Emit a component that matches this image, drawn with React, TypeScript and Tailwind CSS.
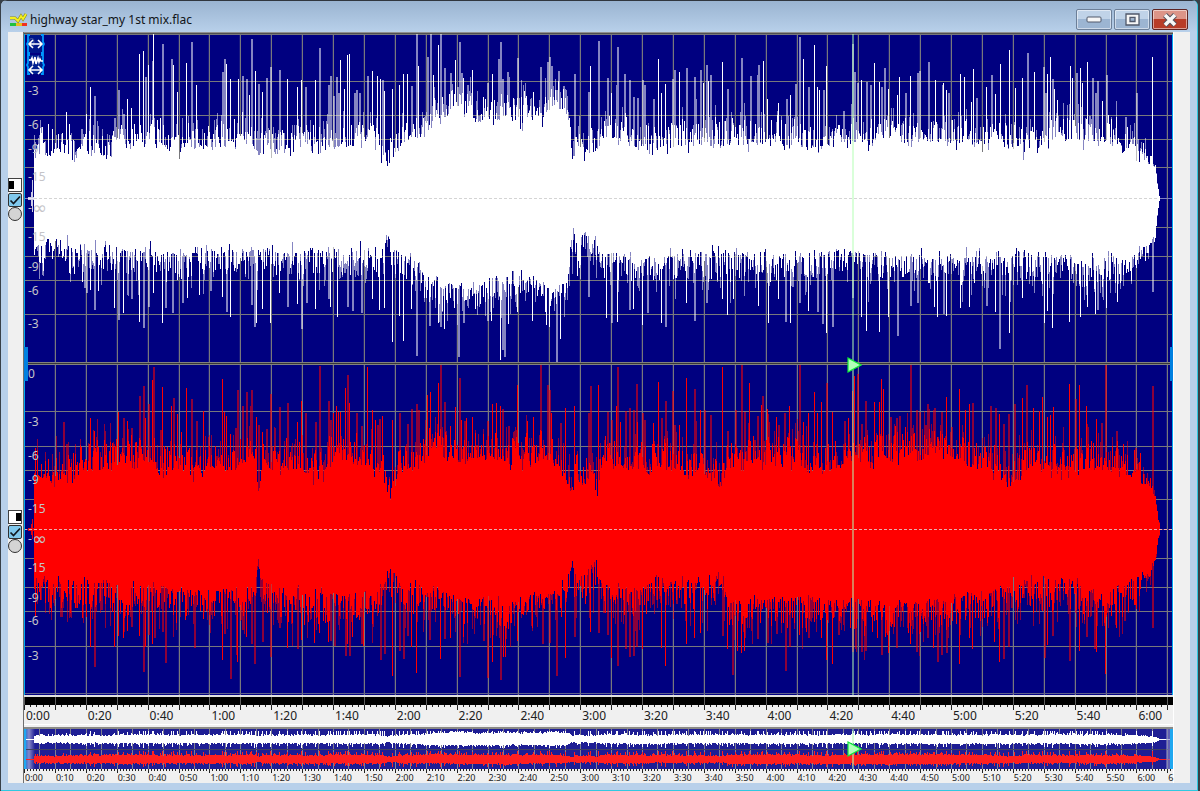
import React from "react";

const LEFT = 24;
const WIDTH = 1149;
const TEN_SECONDS = 30.9;

type Pairs = number[];

/* Edges of the solid body of each channel: x, y pairs joined by straight lines. */
const leftBodyTop: Pairs = [34, 153, 60, 156, 80, 160, 110, 160, 120, 148, 150, 146, 180, 155, 230, 145, 250, 140, 258, 154, 310, 152, 350, 150, 380, 152, 388, 166, 395, 152, 415, 142, 425, 130, 440, 124, 455, 114, 465, 116, 480, 126, 500, 118, 520, 126, 530, 118, 545, 116, 558, 110, 567, 115, 570, 140, 573, 178, 576, 148, 583, 166, 590, 153, 597, 158, 601, 138, 620, 145, 650, 150, 680, 148, 720, 146, 780, 144, 805, 150, 850, 146, 900, 146, 960, 144, 1000, 148, 1020, 152, 1060, 144, 1100, 142, 1130, 150, 1145, 162, 1155, 168, 1157, 185, 1159, 196];
const leftBodyBottom: Pairs = [34, 246, 60, 240, 80, 245, 120, 246, 150, 252, 200, 250, 257, 243, 280, 250, 350, 248, 383, 246, 388, 228, 394, 246, 420, 262, 435, 280, 455, 283, 475, 284, 500, 276, 520, 268, 530, 276, 555, 285, 566, 272, 570, 245, 573, 217, 577, 250, 584, 226, 590, 242, 596, 234, 602, 252, 640, 258, 700, 252, 760, 252, 850, 250, 900, 254, 960, 256, 1020, 250, 1060, 255, 1100, 260, 1130, 255, 1150, 243, 1155, 235, 1157, 215, 1159, 200];
const rightBodyTop: Pairs = [34, 474, 53, 484, 70, 484, 80, 474, 100, 470, 118, 470, 150, 460, 160, 472, 200, 475, 240, 470, 255, 462, 258, 497, 263, 472, 300, 470, 317, 484, 325, 470, 340, 455, 360, 466, 380, 475, 387, 495, 394, 492, 398, 472, 420, 470, 430, 455, 450, 462, 480, 460, 500, 462, 520, 466, 545, 460, 560, 470, 572, 496, 576, 480, 583, 490, 590, 472, 597, 500, 602, 466, 650, 474, 665, 467, 700, 478, 722, 484, 728, 460, 780, 466, 820, 474, 860, 463, 900, 458, 960, 460, 980, 474, 1000, 480, 1015, 488, 1030, 470, 1060, 477, 1090, 472, 1120, 472, 1130, 480, 1150, 488, 1155, 498, 1158, 520, 1160, 528];
const rightBodyBottom: Pairs = [34, 577, 60, 580, 90, 578, 118, 586, 160, 585, 200, 592, 235, 585, 255, 588, 258, 556, 263, 580, 290, 590, 340, 592, 380, 590, 387, 563, 394, 575, 400, 580, 440, 590, 480, 598, 500, 598, 560, 592, 568, 575, 572, 556, 577, 580, 583, 570, 596, 558, 602, 582, 640, 590, 655, 576, 700, 582, 722, 570, 727, 600, 780, 596, 860, 600, 900, 604, 960, 596, 1000, 585, 1060, 578, 1100, 594, 1130, 578, 1150, 568, 1155, 556, 1158, 538, 1160, 531];

/* Transients that stand out of the body: x, y pairs. */
const leftPeaksUp: Pairs = [48, 124, 66, 112, 69, 124, 81, 129, 86, 114, 90, 87, 94, 96, 114, 118, 118, 90, 123, 114, 127, 99, 131, 108, 139, 54, 143, 51, 145, 77, 148, 65, 152, 61, 153, 34, 162, 44, 171, 59, 173, 65, 177, 92, 186, 63, 191, 42, 196, 85, 222, 72, 224, 59, 226, 64, 230, 79, 238, 79, 242, 76, 246, 79, 249, 95, 251, 39, 255, 71, 258, 84, 262, 92, 266, 78, 270, 67, 279, 70, 287, 79, 297, 87, 301, 80, 305, 87, 315, 80, 319, 48, 328, 85, 330, 76, 333, 96, 336, 77, 338, 93, 340, 60, 344, 89, 347, 55, 349, 54, 354, 93, 356, 90, 359, 93, 367, 76, 372, 71, 377, 76, 380, 79, 382, 80, 384, 91, 392, 89, 399, 85, 403, 74, 407, 74, 411, 86, 416, 34, 418, 66, 427, 57, 430, 34, 433, 75, 438, 45, 440, 34, 444, 68, 450, 73, 455, 60, 457, 87, 459, 42, 461, 73, 463, 78, 467, 85, 472, 70, 487, 83, 492, 74, 498, 59, 500, 42, 502, 79, 507, 72, 508, 77, 517, 58, 524, 91, 526, 96, 540, 67, 547, 62, 549, 57, 551, 66, 556, 90, 558, 71, 563, 86, 565, 90, 574, 74, 588, 92, 590, 66, 598, 41, 607, 78, 611, 93, 616, 85, 617, 47, 624, 74, 629, 80, 633, 97, 637, 98, 642, 80, 644, 85, 653, 99, 658, 59, 661, 93, 665, 84, 672, 79, 674, 70, 679, 72, 686, 68, 694, 77, 695, 99, 700, 70, 703, 83, 706, 65, 708, 81, 710, 75, 722, 62, 727, 89, 741, 58, 750, 76, 757, 75, 758, 65, 763, 61, 767, 99, 778, 103, 786, 99, 790, 95, 795, 84, 799, 37, 803, 59, 808, 87, 814, 45, 817, 87, 819, 90, 823, 90, 826, 66, 843, 111, 852, 44, 854, 72, 857, 83, 861, 80, 866, 82, 870, 85, 874, 63, 879, 82, 881, 87, 884, 68, 888, 89, 897, 95, 899, 77, 905, 93, 910, 76, 917, 73, 919, 71, 928, 62, 935, 80, 942, 85, 943, 83, 946, 90, 948, 93, 960, 74, 964, 77, 971, 102, 973, 69, 976, 98, 986, 87, 991, 75, 995, 94, 1000, 64, 1009, 50, 1015, 88, 1022, 78, 1027, 53, 1034, 72, 1043, 67, 1045, 93, 1047, 74, 1050, 57, 1052, 79, 1054, 89, 1057, 100, 1070, 66, 1072, 78, 1076, 73, 1080, 68, 1082, 83, 1087, 62, 1092, 78, 1095, 93, 1097, 81, 1102, 101, 1106, 75, 1125, 117, 1136, 93, 1152, 57];
const leftPeaksDown: Pairs = [69, 273, 82, 282, 84, 288, 86, 293, 90, 290, 94, 310, 98, 291, 114, 308, 118, 320, 123, 313, 127, 295, 131, 299, 139, 322, 143, 328, 148, 307, 153, 293, 162, 323, 165, 308, 172, 313, 182, 303, 187, 298, 199, 295, 210, 291, 222, 297, 226, 312, 230, 317, 251, 305, 254, 327, 256, 323, 262, 309, 270, 323, 279, 293, 287, 307, 297, 304, 301, 329, 306, 303, 315, 309, 328, 299, 330, 307, 337, 317, 347, 307, 352, 311, 361, 313, 372, 299, 379, 310, 384, 308, 392, 342, 399, 316, 403, 341, 411, 309, 416, 356, 429, 326, 438, 323, 440, 327, 444, 329, 458, 357, 463, 323, 487, 321, 491, 321, 500, 360, 502, 350, 504, 357, 508, 324, 517, 312, 532, 321, 546, 325, 549, 327, 556, 362, 560, 339, 588, 297, 606, 318, 611, 323, 617, 322, 629, 310, 633, 309, 642, 325, 647, 313, 661, 323, 665, 327, 686, 303, 694, 321, 706, 303, 722, 299, 727, 315, 733, 299, 758, 306, 768, 323, 778, 299, 785, 322, 790, 323, 799, 303, 808, 311, 817, 312, 822, 324, 826, 333, 832, 327, 852, 298, 861, 317, 866, 331, 879, 332, 888, 317, 897, 336, 910, 306, 917, 303, 934, 307, 937, 317, 943, 314, 946, 316, 960, 308, 969, 307, 986, 306, 995, 312, 999, 349, 1009, 333, 1022, 298, 1044, 323, 1047, 311, 1052, 328, 1069, 322, 1080, 317, 1087, 307, 1095, 314, 1097, 310, 1106, 308, 1117, 302, 1152, 292];
const rightPeaksUp: Pairs = [35, 448, 63, 422, 66, 444, 90, 418, 94, 431, 106, 444, 118, 412, 123, 418, 127, 421, 131, 428, 139, 396, 143, 386, 145, 418, 148, 404, 152, 380, 153, 367, 160, 430, 162, 387, 171, 406, 173, 398, 177, 414, 181, 432, 186, 388, 191, 399, 196, 421, 203, 411, 222, 379, 224, 412, 226, 416, 230, 434, 235, 428, 237, 390, 242, 406, 246, 392, 250, 406, 251, 390, 256, 417, 258, 425, 262, 432, 266, 429, 270, 394, 274, 428, 279, 407, 287, 403, 297, 422, 301, 401, 305, 413, 315, 422, 319, 366, 328, 401, 330, 420, 333, 413, 336, 406, 338, 412, 340, 412, 345, 388, 347, 375, 349, 403, 356, 413, 361, 426, 367, 367, 372, 410, 375, 420, 377, 425, 379, 419, 382, 416, 392, 420, 399, 413, 407, 424, 411, 409, 416, 404, 418, 410, 427, 395, 430, 392, 438, 383, 440, 364, 444, 402, 450, 426, 455, 407, 459, 378, 461, 420, 464, 421, 466, 418, 472, 417, 487, 421, 492, 404, 496, 403, 500, 406, 502, 409, 508, 426, 517, 385, 527, 421, 533, 417, 540, 364, 547, 385, 549, 390, 551, 413, 560, 423, 565, 408, 574, 406, 588, 413, 590, 386, 598, 385, 607, 412, 611, 420, 616, 406, 617, 367, 620, 422, 625, 411, 629, 408, 633, 410, 636, 384, 637, 422, 642, 413, 644, 420, 653, 423, 658, 382, 661, 418, 665, 401, 672, 391, 674, 425, 679, 425, 686, 378, 694, 389, 695, 421, 700, 410, 704, 410, 710, 415, 722, 367, 727, 431, 735, 410, 741, 364, 744, 412, 749, 383, 757, 416, 761, 405, 762, 396, 767, 409, 776, 417, 778, 425, 784, 413, 789, 406, 799, 364, 803, 422, 808, 413, 814, 392, 817, 413, 821, 402, 826, 383, 832, 412, 844, 421, 848, 418, 852, 391, 854, 376, 857, 374, 861, 424, 865, 401, 874, 402, 879, 402, 881, 379, 883, 389, 890, 417, 896, 418, 899, 416, 905, 427, 910, 364, 916, 410, 919, 412, 925, 425, 927, 404, 933, 410, 934, 408, 941, 412, 946, 397, 951, 427, 959, 389, 965, 410, 969, 404, 972, 403, 990, 406, 995, 408, 999, 414, 1003, 424, 1008, 414, 1014, 404, 1022, 398, 1026, 385, 1033, 408, 1039, 411, 1042, 397, 1047, 417, 1050, 415, 1053, 407, 1069, 384, 1075, 399, 1079, 385, 1086, 406, 1096, 419, 1101, 423, 1105, 364, 1116, 431, 1135, 448, 1140, 453, 1152, 386];
const rightPeaksDown: Pairs = [35, 617, 51, 612, 60, 617, 82, 618, 86, 617, 90, 647, 94, 667, 101, 610, 114, 647, 118, 636, 123, 638, 127, 631, 131, 627, 139, 636, 143, 672, 145, 647, 148, 635, 152, 644, 154, 638, 162, 632, 165, 663, 194, 648, 203, 619, 222, 660, 224, 634, 230, 679, 236, 655, 237, 662, 242, 630, 246, 637, 251, 644, 254, 664, 262, 642, 270, 657, 279, 628, 287, 648, 297, 649, 301, 640, 314, 643, 319, 633, 328, 642, 330, 641, 334, 646, 345, 656, 347, 644, 349, 656, 352, 637, 361, 644, 363, 646, 380, 660, 384, 654, 392, 676, 399, 651, 403, 659, 407, 636, 411, 647, 416, 673, 429, 640, 440, 659, 444, 639, 450, 638, 459, 677, 463, 637, 483, 641, 487, 678, 492, 662, 500, 680, 503, 657, 505, 657, 508, 629, 517, 641, 532, 628, 542, 644, 549, 643, 556, 676, 565, 658, 574, 637, 590, 632, 598, 633, 607, 635, 611, 658, 617, 666, 625, 649, 629, 657, 633, 656, 636, 647, 642, 649, 661, 648, 665, 666, 686, 644, 694, 638, 700, 633, 722, 636, 727, 649, 732, 675, 737, 651, 741, 653, 744, 651, 757, 639, 767, 643, 776, 634, 785, 671, 789, 647, 799, 635, 808, 638, 821, 638, 826, 660, 832, 664, 838, 635, 852, 652, 855, 649, 861, 652, 865, 651, 877, 638, 881, 655, 888, 653, 896, 648, 910, 644, 916, 652, 927, 638, 933, 648, 937, 662, 941, 655, 946, 653, 959, 664, 969, 638, 972, 649, 994, 642, 999, 662, 1003, 659, 1008, 647, 1044, 658, 1047, 645, 1052, 636, 1069, 661, 1079, 651, 1086, 637, 1094, 649, 1096, 652, 1105, 674, 1116, 628, 1124, 621, 1152, 628];

function randomFrom(seed: number) {
  let s = seed;
  return () => {
    s = (s * 1664525 + 1013904223) % 4294967296;
    return s / 4294967296;
  };
}

function interpolate(pairs: Pairs, x: number) {
  for (let i = 0; i + 3 < pairs.length; i += 2) {
    if (x <= pairs[i + 2]) {
      const t = (x - pairs[i]) / (pairs[i + 2] - pairs[i]);
      return pairs[i + 1] + t * (pairs[i + 3] - pairs[i + 1]);
    }
  }
  return pairs[pairs.length - 1];
}

/* One side of a channel: the y it reaches in each column, with a crisp and a soft path. */
function buildSide(body: Pairs, peaks: Pairs, center: number, direction: number, spread: number, seed: number) {
  const random = randomFrom(seed);
  const reach: number[] = [];
  let solid = "";
  let soft = "";
  let swell = 0;
  for (let x = 34; x < 1160; x++) {
    const base = interpolate(body, x);
    const fade = Math.min(1, (1160 - x) / 24);
    swell = swell * 0.6 + (random() - 0.4) * 5;
    const notch = random() < 0.14 ? -random() * 10 : 0;
    const extra = (Math.pow(random(), 1.8) * spread + notch + swell) * fade;
    const y = Math.round(base + direction * extra);
    reach[x] = y;
    solid += `M${x} ${center}V${y}h1V${center}z`;
    if (random() < 0.45) {
      const tip = Math.round(y + direction * random() * spread * 0.8 * fade);
      soft += `M${x} ${y}V${tip}h1V${y}z`;
    }
  }
  for (let i = 0; i < peaks.length; i += 2) {
    const x = peaks[i];
    const y = peaks[i + 1];
    if (random() < 0.5) {
      solid += `M${x} ${center}V${y}h1V${center}z`;
    } else {
      soft += `M${x} ${center}V${y}h2V${center}z`;
    }
    reach[x] = y;
  }
  return { reach, solid, soft };
}

const sides = {
  leftUp: buildSide(leftBodyTop, leftPeaksUp, 198, -1, 26, 11),
  leftDown: buildSide(leftBodyBottom, leftPeaksDown, 198, 1, 28, 23),
  rightUp: buildSide(rightBodyTop, rightPeaksUp, 529, -1, 30, 37),
  rightDown: buildSide(rightBodyBottom, rightPeaksDown, 529, 1, 32, 53),
};

function overviewPath(up: number[], down: number[], center: number, middle: number, scale: number) {
  let d = `M24 ${middle}h10v1h-10zM1158 ${middle}h13v1h-13z`;
  for (let x = 34; x < 1159; x++) {
    const top = Math.max(0, Math.min(8, Math.round((center - up[x]) / scale)));
    const bottom = Math.max(0, Math.min(8, Math.round((down[x] - center) / (scale + 3))));
    d += `M${x} ${middle - top}h1V${middle + bottom + 1}h-1z`;
  }
  return d;
}

const overviewLeft = overviewPath(sides.leftUp.reach, sides.leftDown.reach, 198, 739, 14);
const overviewRight = overviewPath(sides.rightUp.reach, sides.rightDown.reach, 529, 759, 17);

const gridX = Array.from({ length: 38 }, (_, i) => Math.round(LEFT + i * TEN_SECONDS));
const leftGridY = [34, 81, 115, 139, 167, 227, 256, 280, 314, 362];
const rightGridY = [364, 411, 446, 470, 499, 558, 587, 611, 646, 693];
const decibels: [string, number][] = [
  ["0", 42], ["-3", 90], ["-6", 124], ["-9", 148], ["-15", 176], ["-∞", 207], ["-15", 236], ["-9", 266], ["-6", 290], ["-3", 323],
  ["0", 373], ["-3", 421], ["-6", 455], ["-9", 479], ["-15", 508], ["-∞", 538], ["-15", 567], ["-9", 597], ["-6", 620], ["-3", 655],
];

function clock(seconds: number) {
  return `${Math.floor(seconds / 60)}:${String(seconds % 60).padStart(2, "0")}`;
}

function percent(x: number) {
  return `${((x - LEFT) / WIDTH) * 100}%`;
}

function Waveform() {
  return (
    <div className="relative overflow-hidden bg-[#000080]">
      <svg className="block h-[661px] w-full" viewBox={`${LEFT} 34 ${WIDTH} 661`} preserveAspectRatio="none" shapeRendering="crispEdges" aria-label="Waveform">
        {gridX.map((x) => (
          <rect key={x} x={x - 1} y="34" width="1" height="661" fill="#4a4a84" opacity=".35" />
        ))}
        {gridX.map((x) => (
          <rect key={x} x={x} y="34" width="1" height="661" fill="#78787c" />
        ))}
        {[...leftGridY, ...rightGridY].map((y) => (
          <rect key={y} x={LEFT} y={y} width={WIDTH} height="1" fill="#78787c" />
        ))}
        <rect x={LEFT} y="198" width={WIDTH} height="1" fill="#8080c0" />
        <rect x={LEFT} y="529" width={WIDTH} height="1" fill="#603080" />
        <path d={sides.leftUp.soft + sides.leftDown.soft} fill="#fff" opacity=".52" />
        <path d={sides.leftUp.solid + sides.leftDown.solid} fill="#fff" />
        <path d="M31 192h1v14h-1zM32 180h1v32h-1zM28 197h6v3h-6z" fill="#fff" opacity=".8" />
        <path d={sides.rightUp.soft + sides.rightDown.soft} fill="#f00" opacity=".55" />
        <path d={sides.rightUp.solid + sides.rightDown.solid} fill="#f00" />
        <path d="M31 524h1v11h-1zM32 519h1v20h-1zM28 528h6v3h-6z" fill="#f00" opacity=".9" />
        <path d="M34 198.500H1157" stroke="#d4d4d4" strokeDasharray="3 2" />
        <path d="M24 529.500H1173" stroke="#e8b0b0" strokeDasharray="3 2" />
        <path d="M24 362h1149v3H24z" fill="#383838" />
        <path d="M24 362h1149v1H24zM24 364h1149v1H24z" fill="#808080" />
        <path d="M24 693h1149v1H24z" fill="#60608c" />
        <path d="M852 34h2v661h-2z" fill="#b4ffb4" opacity=".5" />
        <path d="M24 34h1v661h-1zM1172 34h1v661h-1z" fill="#00a8f0" />
        <path d="M24 347h4v34h-4zM1170 347h3v34h-3z" fill="#0080e0" />
      </svg>
      {decibels.map(([label, y]) => (
        <span key={y} className="absolute left-1 flex text-[12px] leading-4 text-[#c4c4c8]" style={{ top: y - 41 }}>
          {label === "-∞" ? <>-<span className="font-['DejaVu_Sans',sans-serif] text-lg leading-4">∞</span></> : label}
        </span>
      ))}
      <button type="button" aria-label="Zoom selection" className="absolute left-0.5 top-0 h-5 w-[19px]">
        <svg viewBox="0 0 19 20" className="size-full" fill="none">
          <path d="M2 1h15v18H2z" fill="#002090" opacity=".7" />
          <path d="M4 1H2v7L1 10l1 2v7h2M15 1h2v7l1 2-1 2v7h-2" stroke="#0098ff" strokeWidth="1.800" />
          <path d="M4 10h11M7 6l-4 4 4 4M12 6l4 4-4 4" stroke="#fff" strokeWidth="1.600" />
        </svg>
      </button>
      <button type="button" aria-label="Zoom whole wave" className="absolute left-0.5 top-5 h-[21px] w-[19px]">
        <svg viewBox="0 0 19 21" className="size-full" fill="none">
          <path d="M2 1h15v19H2z" fill="#002090" />
          <path d="M4 1H2v8l-1 2 1 2v7h2M15 1h2v8l1 2-1 2v7h-2" stroke="#0098ff" strokeWidth="1.800" />
          <path d="M3 6h2l1-2 1 5 2-6 1 7 2-6 1 4 1-3 1 2h2" stroke="#fff" strokeWidth="1.600" />
          <path d="M4 16h11M7 12l-4 4 4 4M12 12l4 4-4 4" stroke="#fff" strokeWidth="1.600" />
        </svg>
      </button>
      <svg className="absolute top-[323px] h-4 w-[15px]" style={{ left: percent(847) }} viewBox="0 0 15 16">
        <path d="M1 1v14l13-7z" fill="#b0ffb8" stroke="#10e838" strokeWidth="1.200" />
      </svg>
    </div>
  );
}

function Ticks({ count, step, major, height }: { count: number; step: number; major: number; height: string }) {
  let small = "";
  let large = "";
  for (let i = 0; i < count; i++) {
    const x = Math.round(LEFT + i * step);
    if (i % major === 0) large += `M${x} 0h1v5h-1z`;
    else small += `M${x} 0h1v2h-1z`;
  }
  return (
    <svg className={`block w-full ${height}`} viewBox={`${LEFT} 0 ${WIDTH} 5`} preserveAspectRatio="none" shapeRendering="crispEdges" aria-hidden="true">
      <path d={small + large} fill="#222" />
    </svg>
  );
}

function Ruler() {
  const labels = Array.from({ length: 19 }, (_, i) => i);
  return (
    <div>
      <div className="h-0.5 bg-[#e0e0e0]" />
      <svg className="block h-2 w-full bg-black" viewBox={`${LEFT} 0 ${WIDTH} 8`} preserveAspectRatio="none" shapeRendering="crispEdges" aria-hidden="true">
        {gridX.map((x) => (
          <rect key={x} x={x} y="0" width="1" height="8" fill="#606060" />
        ))}
      </svg>
      <div className="relative h-5 overflow-hidden border-b border-white bg-[#f0f0f0]">
        <Ticks count={186} step={6.18} major={5} height="h-[5px]" />
        {labels.map((i) => (
          <span key={i} className="absolute top-0.5 pl-0.5 text-[12px] leading-[18px] text-[#202020]" style={{ left: percent(LEFT + i * TEN_SECONDS * 2) }}>
            {clock(i * 20)}
          </span>
        ))}
      </div>
    </div>
  );
}

function Overview() {
  const lines = Array.from({ length: 75 }, (_, i) => Math.round(LEFT + i * 15.45));
  const labels = [...Array.from({ length: 37 }, (_, i) => clock(i * 10)), "6"];
  return (
    <div className="mt-0.5 border-t-2 border-[#8a8a86] bg-[#f0f0f0]">
      <div className="relative">
        <svg className="block h-10 w-full bg-[#1e1e94]" viewBox={`${LEFT} 729 ${WIDTH} 40`} preserveAspectRatio="none" aria-label="Overview">
          <defs>
            <linearGradient id="edgeStart">
              <stop offset="0" stopColor="#20a8f0" />
              <stop offset=".25" stopColor="#4a78d0" />
              <stop offset=".45" stopColor="#8888c8" />
              <stop offset="1" stopColor="#1e1e94" />
            </linearGradient>
          </defs>
          <g shapeRendering="crispEdges">
            <rect x="24" y="729" width="11" height="40" fill="url(#edgeStart)" />
            {lines.map((x) => (
              <rect key={x} x={x} y="729" width="1" height="40" fill="#808090" />
            ))}
            <path d="M24 749h1149v1H24z" fill="#404060" />
            <path d={overviewLeft} fill="#fff" />
            <path d={overviewRight} fill="#ff2020" />
            <path d="M852 729h2v40h-2z" fill="#b4ffb4" opacity=".55" />
            <path d="M1166 729h4v40h-4z" fill="#8888c8" opacity=".6" />
            <path d="M24 729h2v40h-2zM1170 729h3v40h-3z" fill="#20a8f0" />
          </g>
        </svg>
        <svg className="absolute top-3 h-4 w-[15px]" style={{ left: percent(847) }} viewBox="0 0 15 16">
          <path d="M1 1v14l13-7z" fill="#b0ffb8" stroke="#10e838" strokeWidth="1.200" />
        </svg>
      </div>
      <div className="relative h-3.5">
        <Ticks count={372} step={3.09} major={10} height="h-1" />
        {labels.map((label, i) => (
          <span key={i} className="absolute top-[3px] pl-px text-[9px] leading-3 text-[#202020]" style={{ left: percent(LEFT + i * TEN_SECONDS) }}>
            {label}
          </span>
        ))}
      </div>
    </div>
  );
}

function ChannelControls({ name, side }: { name: string; side: "left" | "right" }) {
  return (
    <div className="flex h-[332px] flex-col items-center justify-center">
      <button
        type="button"
        aria-label={`Solo ${name}`}
        className={`mb-px flex h-3.5 w-3.5 items-center border border-[#404040] bg-white ${side === "left" ? "justify-start" : "justify-end"}`}
      >
        <span className="h-2 w-[5px] bg-black" />
      </button>
      <span className="relative block size-3.5">
        <input type="checkbox" defaultChecked aria-label={`Enable ${name}`} className="block size-3.5 appearance-none rounded-xs border border-[#303030] bg-[#80c8ec]" />
        <svg viewBox="0 0 14 14" className="pointer-events-none absolute inset-0" fill="none" aria-hidden="true">
          <path d="M2.500 7.500 5.500 10.500 12 3.500" stroke="#101820" strokeWidth="1.700" />
        </svg>
      </span>
      <input type="radio" name="active-channel" aria-label={`Select ${name}`} className="block size-3.5 appearance-none rounded-full border border-[#303030] bg-[#d4d4d4]" />
    </div>
  );
}

function TitleBar() {
  const frame = "flex h-[21px] items-center justify-center rounded-xs border shadow-[inset_0_0_0_1px_rgba(255,255,255,0.5)]";
  const plain = "border-[#6c7f98] bg-linear-to-b from-[#c0d3e8] from-50% to-[#9cb5d2] to-50%";
  return (
    <header className="flex h-8 items-center border-t border-[#30363e] bg-linear-to-b from-[#9ab4d1] to-[#b8d0ea] pl-2 pr-[9px] pt-1.5">
      <svg width="19" height="16" viewBox="0 0 19 16" fill="none" aria-hidden="true">
        <rect x="1" y="11" width="17" height="3" fill="#e8c020" />
        <path d="M1 11h6v3H1z" fill="#20c040" />
        <path d="M13 11h5v3h-5z" fill="#f03020" />
        <path d="M1 6h5l3 3 3-5 2 3 3-5" stroke="#8a8a20" strokeWidth="3" />
        <path d="M1 6h5l3 3 3-5 2 3 3-5" stroke="#f4f020" strokeWidth="1.800" />
      </svg>
      <h1 className="ml-0.5 flex-1 text-xs text-[#101418]">highway star_my 1st mix.flac</h1>
      <div className="flex gap-0.5">
        <button type="button" aria-label="Minimize" className={`${frame} ${plain} w-9`}>
          <svg width="16" height="7" viewBox="0 0 16 7"><rect x="1" y="1" width="14" height="5" rx="1" fill="#f6f6f6" stroke="#50586a" /></svg>
        </button>
        <button type="button" aria-label="Maximize" className={`${frame} ${plain} w-9`}>
          <svg width="15" height="13" viewBox="0 0 15 13"><path fillRule="evenodd" d="M1 1h13v11H1zM5 4.500h5v4H5z" fill="#f6f6f6" stroke="#50586a" strokeWidth="1.300" /></svg>
        </button>
        <button type="button" aria-label="Close" className={`${frame} w-9 border-[#5c2424] bg-linear-to-b from-[#dc9488] from-50% to-[#b83c28] to-50%`}>
          <svg width="18" height="14" viewBox="0 0 18 14" fill="none">
            <path d="m4 2 10 10M14 2 4 12" stroke="#50505c" strokeWidth="5.500" />
            <path d="m4 2 10 10M14 2 4 12" stroke="#f8f8f8" strokeWidth="3.600" />
          </svg>
        </button>
      </div>
    </header>
  );
}

export default function App() {
  return (
    <div className="min-h-screen bg-[#384048] pl-px pr-0.5 font-['Noto_Sans','Open_Sans',sans-serif]">
      <div className="overflow-hidden rounded-t-md border-b border-r border-[#30c8e0] bg-[#b8d0ea]">
        <TitleBar />
        <main className="mb-[7px] ml-[7px] mr-[7px] flex bg-[#f0f0f0]">
          <aside className="w-4 border-r border-[#707070] pr-px pt-px">
            <ChannelControls name="left channel" side="left" />
            <ChannelControls name="right channel" side="right" />
          </aside>
          <section className="min-w-0 flex-1">
            <div className="h-0.5 border-t border-[#909090] bg-[#505050]" />
            <Waveform />
            <Ruler />
            <Overview />
          </section>
          <aside className="w-[17px] border-l border-white" />
        </main>
      </div>
    </div>
  );
}
